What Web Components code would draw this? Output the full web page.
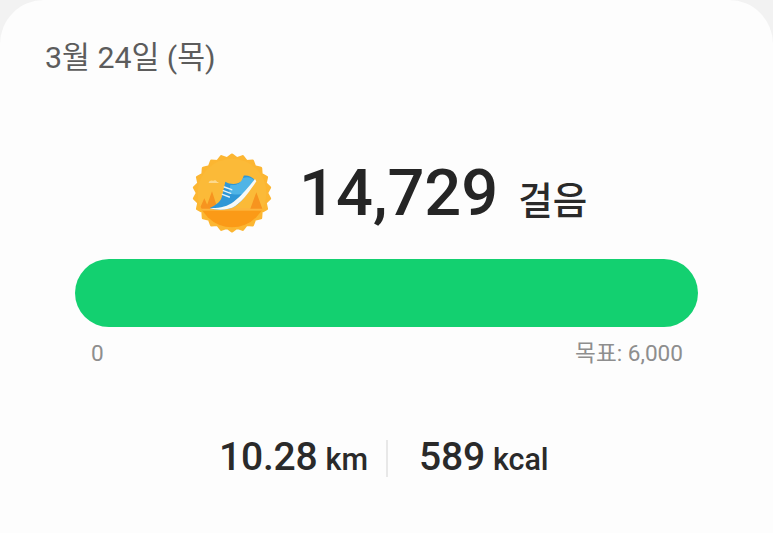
<!doctype html>
<html><head><meta charset="utf-8"><style>
html,body{margin:0;padding:0;background:#f2f2f2;height:533px;overflow:hidden}
body{font-family:Roboto,"Noto Sans CJK KR",sans-serif}
</style></head><body>
<step-card></step-card>
<script>
const F='Roboto,"Noto Sans CJK KR",sans-serif';
class StepBadge extends HTMLElement{constructor(){super();const s=this.attachShadow({mode:'open'});
let pts=[];const n=22;for(let i=0;i<n*2;i++){const r=i%2?104:114;const a=i*Math.PI/n-Math.PI/2;pts.push((155+r*Math.cos(a)).toFixed(2)+','+(160+r*Math.sin(a)).toFixed(2));}
s.innerHTML=`<style>:host{display:block;width:80px;height:80px;flex:none}svg{display:block;filter:blur(.55px)}</style>
<svg width="80" height="80" viewBox="35 40 240 240">
<polygon points="${pts.join(' ')}" fill="#fcb632" stroke="#fcb632" stroke-width="9" stroke-linejoin="round"/>
<clipPath id="c"><circle cx="155" cy="160" r="103"/></clipPath>
<circle cx="155" cy="160" r="103" fill="#fbba38"/>
<g clip-path="url(#c)">
<path d="M40 207H270V280H40Z" fill="#fb9a17"/>
<rect x="40" y="205" width="230" height="8" fill="#fcb53c"/>
<path d="M95 155L112 207H76Z M72 176L86 207H58Z M228 158L246 207H210Z" fill="#f7941f"/>
</g>
<path d="M85 129c2-6 9-8 13-5 4-4 11-2 12 3 3 0 5 1 5 3H85z" fill="#fdd98c"/>
<path d="M88 205C110 195 122 185 125 170L135 126C150 135 170 135 185 125L190 108C202 106 216 112 224 122L192 172C178 192 160 206 140 208C120 212 100 210 88 205Z" fill="#2f97d6"/>
<path d="M150 136C170 138 180 132 187 116C200 110 214 114 222 122L194 160C178 166 160 166 146 160Z" fill="#4fb4e6"/>
<path d="M88 205C118 206 142 200 160 186C184 168 205 142 224 118L228 125C210 152 190 182 165 199C145 212 110 213 88 205Z" fill="#f6f9f7"/>
<path d="M132 142l22 8M129 153l22 8M126 164l21 8" stroke="#e4f1f6" stroke-width="4.5" fill="none" stroke-linecap="round"/>
</svg>`}}
customElements.define('step-badge',StepBadge);
class StepProgress extends HTMLElement{constructor(){super();this.attachShadow({mode:'open'}).innerHTML=`<style>
:host{display:block;margin:0 75px}
.bar{height:68px;border-radius:34px;background:#13d070}
.scale{display:flex;justify-content:space-between;padding:13px 15px 0 16px;font:22.6px/27px ${F};color:#8e8e8e}
</style><div class="bar"></div><div class="scale"><span>0</span><span>목표: 6,000</span></div>`}}
customElements.define('step-progress',StepProgress);
class StepStat extends HTMLElement{constructor(){super();this.attachShadow({mode:'open'}).innerHTML=`<style>
:host{display:block;font:500 39px/44px ${F};color:#2a2a2a;white-space:nowrap;letter-spacing:-.2px}
.u{font-size:30.5px;margin-left:8px;letter-spacing:0}
</style><slot></slot><span class="u">${this.getAttribute('unit')||''}</span>`}}
customElements.define('step-stat',StepStat);
class StepCard extends HTMLElement{constructor(){super();this.attachShadow({mode:'open'}).innerHTML=`<style>
:host{display:block;box-sizing:border-box;width:773px;height:533px;background:#fdfdfd;border-radius:44px 44px 0 0;padding-top:39px;font-family:${F}}
.date{margin-left:45px;font-size:30.3px;line-height:38px;color:#5c5c5c}
.head{display:flex;align-items:center;margin-top:76px;height:80px;padding-left:192px}
.num{font:500 65px/80px ${F};color:#252525;margin-left:27px}
.unit{font:500 37.5px/80px ${F};color:#2a2a2a;margin-left:20px;padding-top:16px}
step-progress{margin-top:26px}
.stats{display:flex;align-items:center;margin-top:68px;padding-left:219px}
.sep{width:2px;height:37px;background:#e8e8e8;margin:0 31px 0 18px}
</style>
<div class="date">3월 24일 (목)</div>
<div class="head"><step-badge></step-badge><span class="num">14,729</span><span class="unit">걸음</span></div>
<step-progress></step-progress>
<div class="stats"><step-stat unit="km">10.28</step-stat><div class="sep"></div><step-stat unit="kcal">589</step-stat></div>`}}
customElements.define('step-card',StepCard);
</script></body></html>
